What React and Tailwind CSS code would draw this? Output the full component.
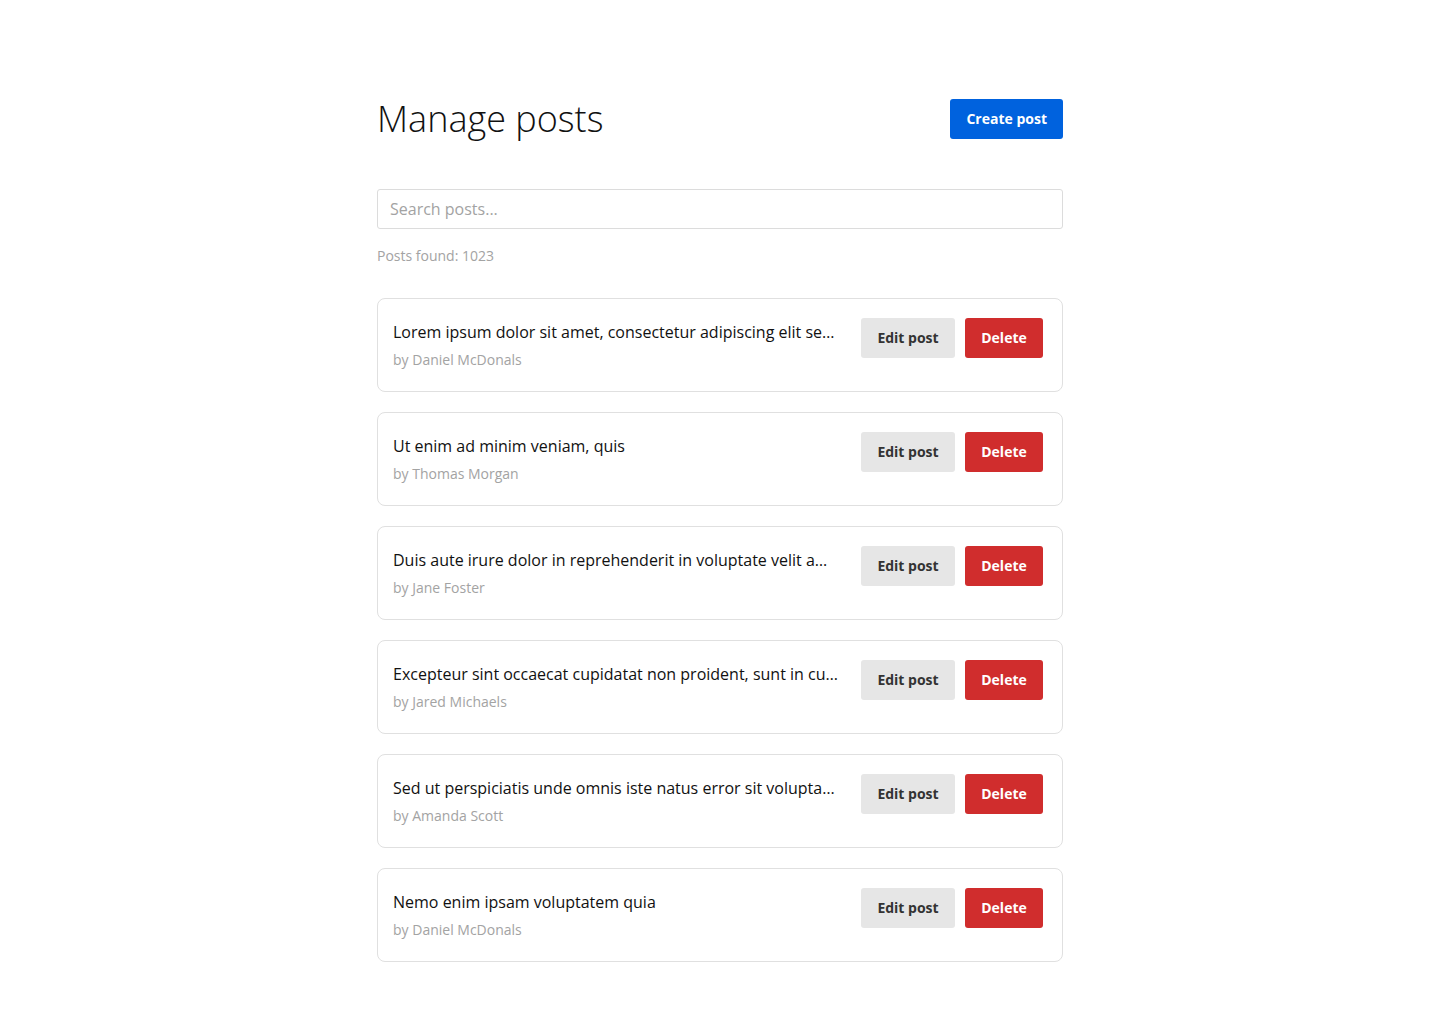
import React from 'react';

const posts = [
  { title: 'Lorem ipsum dolor sit amet, consectetur adipiscing elit sed do eiusmod tempor incididunt', author: 'Daniel McDonals' },
  { title: 'Ut enim ad minim veniam, quis', author: 'Thomas Morgan' },
  { title: 'Duis aute irure dolor in reprehenderit in voluptate velit amet mollit est laborum', author: 'Jane Foster' },
  { title: 'Excepteur sint occaecat cupidatat non proident, sunt in culpa qui officia', author: 'Jared Michaels' },
  { title: 'Sed ut perspiciatis unde omnis iste natus error sit voluptatem accusantium', author: 'Amanda Scott' },
  { title: 'Nemo enim ipsam voluptatem quia', author: 'Daniel McDonals' },
];

export default function App() {
  return (
    <div className="min-h-screen bg-white font-['Open_Sans',sans-serif] text-[#111]">
      <div className="mx-auto w-[686px] pt-[96px] pb-16">
        {/* Header */}
        <div className="flex items-center justify-between">
          <h1 className="text-[36px] font-light leading-[46px] text-[#111]">Manage posts</h1>
          <button className="h-10 rounded-[3px] bg-[#0062de] px-4 text-sm font-bold text-white">Create post</button>
        </div>

        {/* Search */}
        <input
          type="text"
          placeholder="Search posts..."
          className="mt-[47px] block h-10 w-full rounded-[3px] border border-[#dcdcdc] px-3 text-base text-[#111] outline-none placeholder:text-[#a3a3a3]"
        />
        <p className="mt-[17px] text-sm leading-5 text-[#a3a3a3]">Posts found: 1023</p>

        {/* List */}
        <div className="mt-8 flex flex-col gap-5">
          {posts.map((p, i) => (
            <div key={i} className="flex items-start gap-[22px] rounded-lg border border-[#e0e0e0] py-[19px] pl-[15px] pr-[19px]">
              <div className="min-w-0 flex-1">
                <div className="truncate text-base leading-7 text-[#111]">{p.title}</div>
                <div className="mt-[2px] text-sm leading-6 text-[#a3a3a3]">by {p.author}</div>
              </div>
              <div className="flex shrink-0 gap-[10px]">
                <button className="h-10 w-[94px] rounded-[3px] bg-[#e6e6e6] text-sm font-bold text-[#333]">Edit post</button>
                <button className="h-10 w-[78px] rounded-[3px] bg-[#d02d2d] text-sm font-bold text-white">Delete</button>
              </div>
            </div>
          ))}
        </div>
      </div>
    </div>
  );
}
